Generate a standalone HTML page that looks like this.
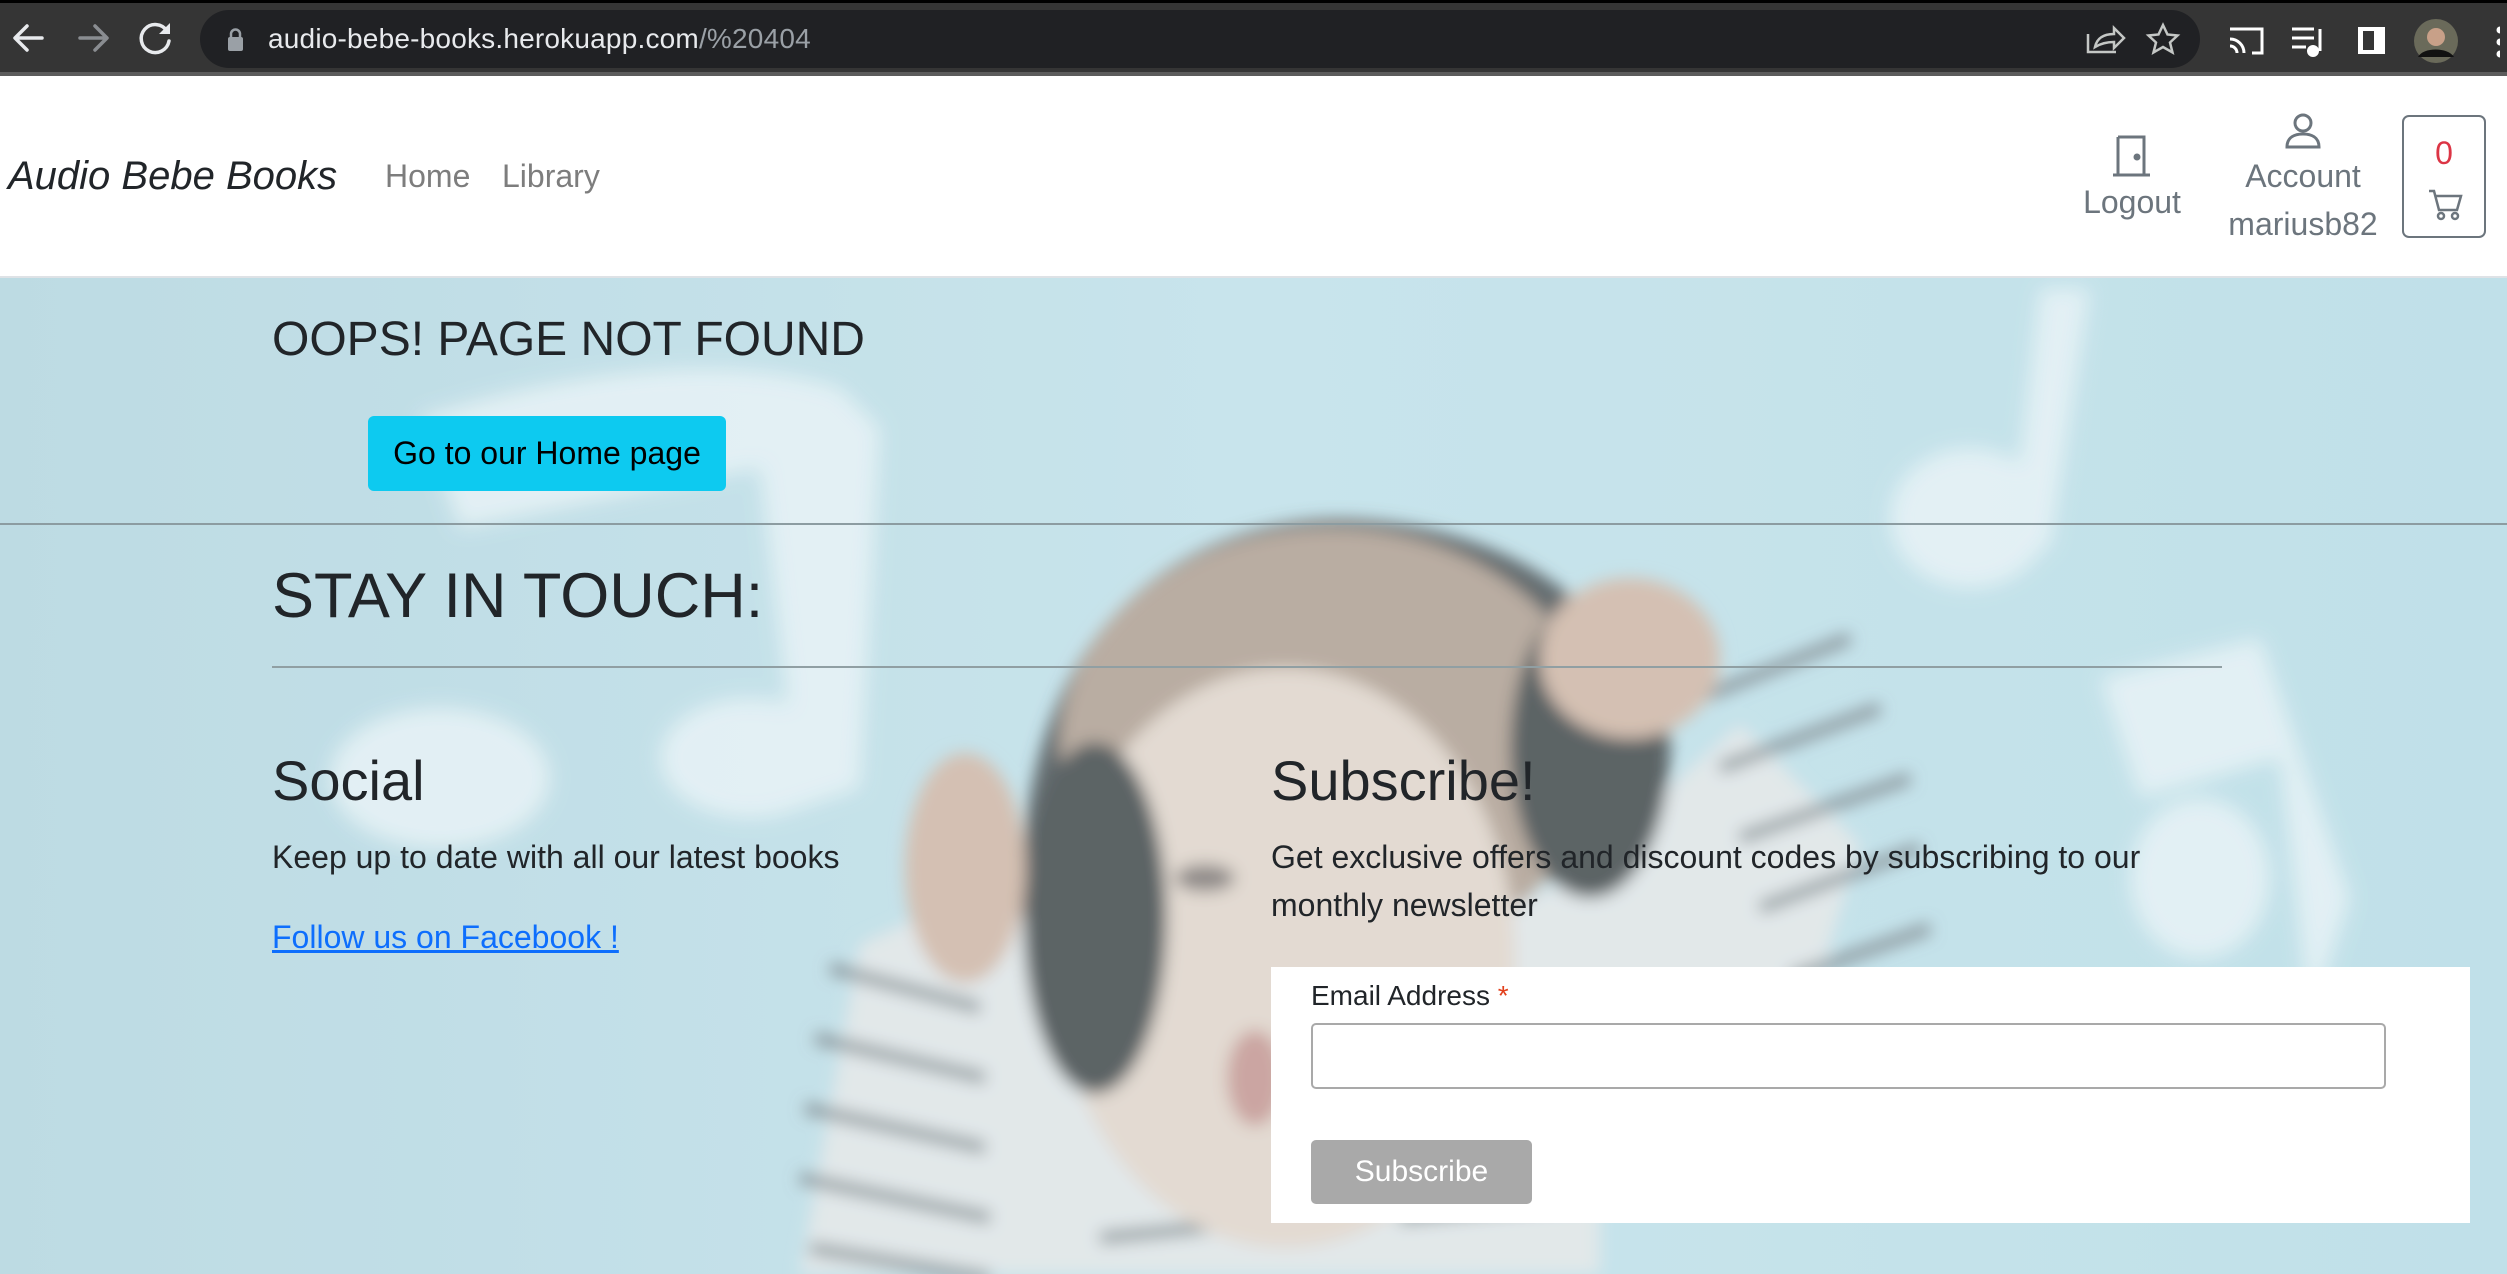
<!DOCTYPE html>
<html><head><meta charset="utf-8">
<style>
*{margin:0;padding:0;box-sizing:border-box}
body{width:2507px;height:1274px;overflow:hidden;font-family:"Liberation Sans",Arial,sans-serif;background:#fff;position:relative}
.chrome{position:absolute;left:0;top:0;width:2507px;height:76px;background:#353535;border-top:3px solid #000;border-bottom:4px solid #5c5c5c}
.pill{position:absolute;left:200px;top:7px;width:2000px;height:58px;background:#202124;border-radius:29px}
.url{position:absolute;left:268px;top:20px;font-size:28px;color:#e8eaed;letter-spacing:0.2px}
.url span{color:#9aa0a6}
.nav{position:absolute;left:0;top:76px;width:2507px;height:202px;background:#fff;border-bottom:2px solid #dee2e6}
.abs{position:absolute}
.bg{position:absolute;left:0;top:278px;width:2507px;height:996px;overflow:hidden;background:#b9dde6}
.t{color:#212529;position:absolute}
</style></head><body>
<div class="chrome">
 <div class="pill"></div>
 <svg class="abs" style="left:0;top:0" width="200" height="72">
  <g fill="none" stroke-width="3.5" stroke-linecap="round" stroke-linejoin="round">
   <path d="M42 35H16M27 23L15 35l12 12" stroke="#e8eaed"/>
   <path d="M80 35h26M95 23l12 12-12 12" stroke="#8a8d91"/>
   <path d="M167 28a14 14 0 1 0 2 10" stroke="#e8eaed"/>
  </g>
  <path d="M170 20v11h-11z" fill="#e8eaed"/>
 </svg>
 <svg class="abs" style="left:226px;top:24px" width="20" height="26"><rect x="2" y="10" width="15" height="14" rx="2" fill="#9aa0a6"/><path d="M5 11V7a4.5 4.5 0 0 1 9 0v4" fill="none" stroke="#9aa0a6" stroke-width="2.5"/></svg>
 <div class="url">audio-bebe-books.herokuapp.com<span>/%20404</span></div>
 <svg class="abs" style="left:2080px;top:14px" width="420" height="50">
  <g fill="none" stroke="#c4c7c5" stroke-width="2.5">
   <path d="M8 17v18h28"/><path d="M15 30c2-9 9-13 19-13v-6l10 10-10 10v-6c-8 0-14 2-19 5z"/>
   <path d="M83 8l4.5 9.5 10 1-7.5 7 2.5 10-9.5-5.5-9.5 5.5 2.5-10-7.5-7 10-1z"/>
  </g>
  <g fill="none" stroke="#fff" stroke-width="3">
   <path d="M150 12h32v24h-10"/><path d="M150 22a14 14 0 0 1 14 14M150 29a7 7 0 0 1 7 7"/>
   <path d="M212 12h22M212 21h22M212 30h14"/><path d="M240 12v22"/>
  </g>
  <circle cx="233" cy="34" r="6" fill="#fff"/>
  <rect x="278" y="10" width="27" height="27" fill="#fff"/><rect x="283" y="14" width="11" height="19" fill="#353535"/>
  <circle cx="356" cy="24" r="22" fill="#6a6a5a"/><circle cx="356" cy="20" r="9" fill="#c8a088"/><path d="M338 40c5-10 30-10 36 0z" fill="#111"/>
  <circle cx="420" cy="13" r="3.5" fill="#fff"/><circle cx="420" cy="25" r="3.5" fill="#fff"/><circle cx="420" cy="37" r="3.5" fill="#fff"/>
 </svg>
</div>
<div class="nav">
 <div class="abs" style="left:8px;top:76px;font-size:40px;font-style:italic;color:#212529;line-height:48px">Audio Bebe Books</div>
 <div class="abs" style="left:385px;top:80px;font-size:32px;color:#7d7d7d;line-height:40px">Home</div>
 <div class="abs" style="left:502px;top:80px;font-size:32px;color:#7d7d7d;line-height:40px">Library</div>
 <svg class="abs" style="left:2110px;top:58px" width="45" height="45" fill="none" stroke="#6c757d" stroke-width="3"><path d="M8 3h26v38M8 3v38M3 41h37"/><circle cx="27" cy="23" r="2" fill="#6c757d"/></svg>
 <div class="abs" style="left:2052px;top:106px;width:160px;text-align:center;font-size:32px;color:#6c757d;line-height:40px">Logout</div>
 <svg class="abs" style="left:2285px;top:37px" width="36" height="36" fill="none" stroke="#6c757d" stroke-width="3"><circle cx="18" cy="10" r="8"/><path d="M2 34c0-10 8-13 16-13s16 3 16 13z"/></svg>
 <div class="abs" style="left:2203px;top:80px;width:200px;text-align:center;font-size:32px;color:#6c757d;line-height:40px">Account</div>
 <div class="abs" style="left:2203px;top:128px;width:200px;text-align:center;font-size:32px;color:#6c757d;line-height:40px">mariusb82</div>
 <div class="abs" style="left:2402px;top:39px;width:84px;height:123px;border:2px solid #6c757d;border-radius:7px">
  <div style="position:absolute;top:16px;width:80px;text-align:center;font-size:32px;color:#dc3545;line-height:40px">0</div>
  <svg class="abs" style="left:24px;top:72px" width="36" height="32" fill="none" stroke="#6c757d" stroke-width="2.5"><path d="M1 2h5l5 19h18l4-14H8"/><circle cx="13" cy="27" r="3"/><circle cx="27" cy="27" r="3"/></svg>
 </div>
</div>
<div class="bg">
 <svg width="2507" height="996" style="position:absolute;left:0;top:0">
  <defs><filter id="b"><feGaussianBlur stdDeviation="10"/></filter><filter id="b2"><feGaussianBlur stdDeviation="8"/></filter>
  <linearGradient id="g" x1="0" x2="1"><stop offset="0" stop-color="#b2d5df"/><stop offset=".5" stop-color="#bfe0e9"/><stop offset="1" stop-color="#b6dbe5"/></linearGradient></defs>
  <rect width="2507" height="996" fill="url(#g)"/>
  <g filter="url(#b)" fill="#e2f0f4" opacity=".9">
   <path d="M420 140c120-40 300-70 420-30l40 40-20 360-60 20-40-340-300 60z"/>
   <ellipse cx="440" cy="500" rx="110" ry="70"/><ellipse cx="750" cy="480" rx="90" ry="60"/>
   <path d="M2040 10l50 0-40 260-40 0z"/><ellipse cx="1970" cy="240" rx="80" ry="70"/>
   <path d="M2100 400l160-40 90 260-40 120-30-260-140 40z"/><ellipse cx="2200" cy="600" rx="70" ry="80"/>
  </g>
  <g filter="url(#b2)">
   <path d="M800 996l60-330 180-80 220 160 300-140 180-160 120 120-60 200-200 150 0 80z" fill="#dde4e6"/>
   <g stroke="#6f7b80" stroke-width="12" fill="none" opacity=".85">
    <path d="M830 690l150 40M815 760l170 40M805 830l180 40M800 900l190 40M810 970l180 30"/>
    <path d="M1700 420l150-60M1720 490l160-60M1740 560l170-60M1760 630l160-60M1790 700l140-50"/>
    <path d="M1100 960l200-20M1400 940l200-20"/>
   </g>
   <path d="M1040 640C1030 330 1230 250 1360 260C1500 270 1620 340 1620 460" fill="none" stroke="#4a5256" stroke-width="36"/>
   <ellipse cx="1330" cy="470" rx="270" ry="220" fill="#ad9f92"/>
   <ellipse cx="1285" cy="680" rx="230" ry="290" fill="#ded4ca"/>
   <ellipse cx="1095" cy="640" rx="72" ry="176" fill="#40484c"/>
   <ellipse cx="1590" cy="470" rx="80" ry="150" fill="#40484c"/>
   <ellipse cx="1630" cy="380" rx="90" ry="80" fill="#cdb6a6"/>
   <ellipse cx="965" cy="590" rx="60" ry="115" fill="#cdb6a6"/>
   <ellipse cx="1205" cy="600" rx="30" ry="14" fill="#7e7876"/>
   <ellipse cx="1255" cy="800" rx="28" ry="48" fill="#c29692"/>
  </g>
  <rect width="2507" height="996" fill="#ffffff" opacity=".15"/>
 </svg>
 <div class="t" style="left:272px;top:34px;font-size:48px;line-height:56px">OOPS! PAGE NOT FOUND</div>
 <div class="abs" style="left:368px;top:138px;width:358px;height:75px;background:#0dcaf0;border-radius:6px;font-size:32px;line-height:75px;text-align:center;color:#000">Go to our Home page</div>
 <div class="abs" style="left:0;top:245px;width:2507px;height:2px;background:#8c9ca1"></div>
 <div class="t" style="left:272px;top:282px;font-size:63px;line-height:72px">STAY IN TOUCH:</div>
 <div class="abs" style="left:272px;top:388px;width:1950px;height:2px;background:#909fa3"></div>
 <div class="t" style="left:272px;top:470px;font-size:56px;line-height:66px">Social</div>
 <div class="t" style="left:272px;top:555px;font-size:32px;line-height:48px">Keep up to date with all our latest books</div>
 <div class="abs" style="left:272px;top:635px;font-size:32px;line-height:48px;color:#0d6efd;text-decoration:underline">Follow us on Facebook !</div>
 <div class="t" style="left:1271px;top:470px;font-size:56px;line-height:66px">Subscribe!</div>
 <div class="t" style="left:1271px;top:555px;font-size:32px;line-height:48px;width:880px">Get exclusive offers and discount codes by subscribing to our monthly newsletter</div>
 <div class="abs" style="left:1271px;top:689px;width:1199px;height:256px;background:#fff">
  <div class="abs" style="left:40px;top:12px;font-size:28px;line-height:34px;color:#212529">Email Address <span style="color:#e2401c">*</span></div>
  <div class="abs" style="left:40px;top:56px;width:1075px;height:66px;border:2px solid #a9a9a9;border-radius:5px"></div>
  <div class="abs" style="left:40px;top:173px;width:221px;height:64px;background:#a9a9a9;border-radius:5px;color:#fff;font-size:30px;line-height:64px;text-align:center">Subscribe</div>
 </div>
</div>
</body></html>
